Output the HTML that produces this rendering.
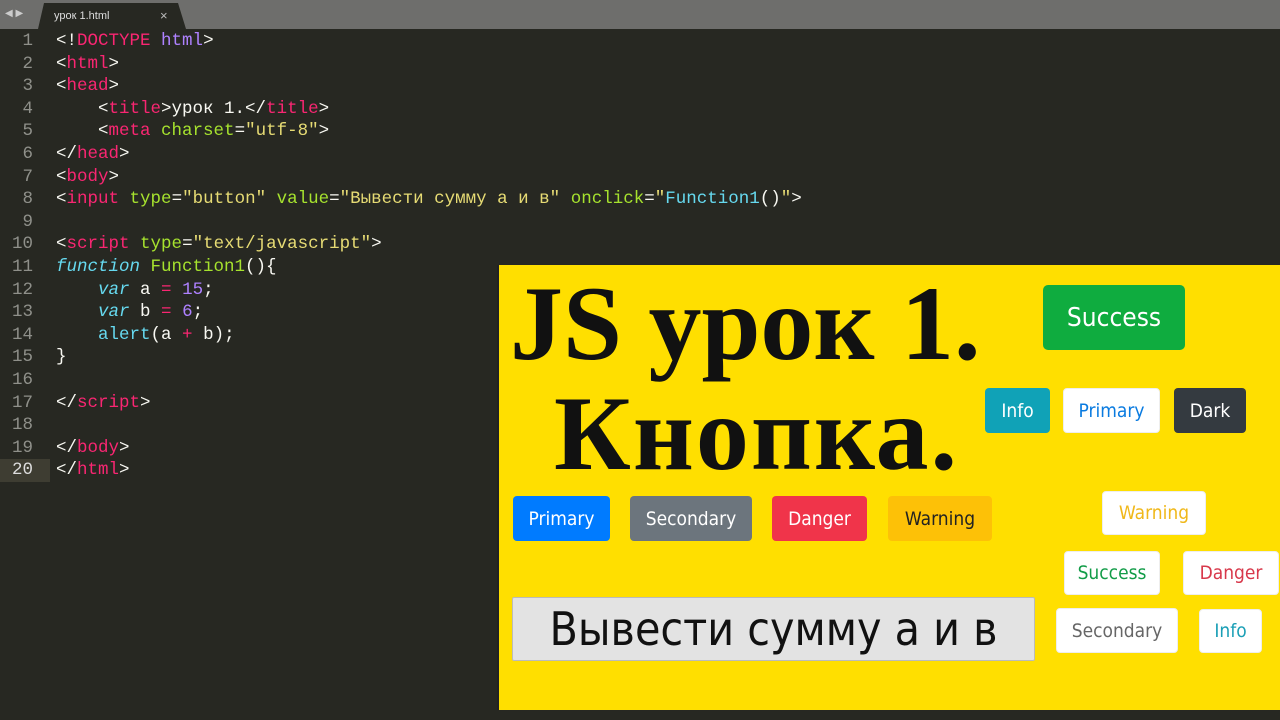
<!DOCTYPE html>
<html><head><meta charset="utf-8"><style>
body{margin:0;width:1280px;height:720px;background:#272822;position:relative;overflow:hidden;font-family:"Liberation Sans",sans-serif}
.tabbar{position:absolute;left:0;top:0;width:1280px;height:29px;background:#6e6e6c}
.tab{position:absolute;left:38px;top:3px;width:148px;height:26px;background:#272822;clip-path:polygon(6px 0,140px 0,148px 100%,0 100%)}
.tab span{position:absolute;left:16px;top:7px;color:#ddd;font-size:11px}
.tab b{position:absolute;left:122px;top:5px;color:#bbb;font-size:13px;font-weight:normal}
.arrows{position:absolute;left:5px;top:8px;color:#ccc;font-size:10px}
.code{position:absolute;left:0;top:30px;font-family:"Liberation Mono",monospace;font-size:17.5px;line-height:22.6px;color:#f8f8f2;white-space:pre}
.ln{display:inline-block;width:33px;text-align:right;color:#8f908a;margin-right:23px}
.cur{background:#3e3d32;display:inline-block;width:50px;margin-right:6px}
.cur .ln{margin-right:0}
.k{color:#f92672}.a{color:#a6e22e}.s{color:#e6db74}.p{color:#ae81ff}.c{color:#66d9ef}.i{color:#66d9ef;font-style:italic}
.panel{position:absolute;left:497px;top:265px;width:790px;height:445px;background:#ffdf00;border-left:2px solid #222}
.h{position:absolute;font-family:"Liberation Serif",serif;font-weight:bold;font-size:106px;color:#111;white-space:nowrap;line-height:1}
.btn{position:absolute;border-radius:4px;font-family:"DejaVu Sans Condensed","Liberation Sans",sans-serif;font-size:19px;display:flex;align-items:center;justify-content:center;box-sizing:border-box}
.w{background:#fff;border:1px solid #eee}
</style></head><body>
<div class="tabbar"><div class="arrows">◀ ▶</div><div class="tab"><span>урок 1.html</span><b>×</b></div></div>
<div class="code"><span class="ln">1</span>&lt;!<span class="k">DOCTYPE</span> <span class="p">html</span>&gt;
<span class="ln">2</span>&lt;<span class="k">html</span>&gt;
<span class="ln">3</span>&lt;<span class="k">head</span>&gt;
<span class="ln">4</span>    &lt;<span class="k">title</span>&gt;урок 1.&lt;/<span class="k">title</span>&gt;
<span class="ln">5</span>    &lt;<span class="k">meta</span> <span class="a">charset</span>=<span class="s">"utf-8"</span>&gt;
<span class="ln">6</span>&lt;/<span class="k">head</span>&gt;
<span class="ln">7</span>&lt;<span class="k">body</span>&gt;
<span class="ln">8</span>&lt;<span class="k">input</span> <span class="a">type</span>=<span class="s">"button"</span> <span class="a">value</span>=<span class="s">"Вывести сумму а и в"</span> <span class="a">onclick</span>=<span class="s">"</span><span class="c">Function1</span>()<span class="s">"</span>&gt;
<span class="ln">9</span>
<span class="ln">10</span>&lt;<span class="k">script</span> <span class="a">type</span>=<span class="s">"text/javascript"</span>&gt;
<span class="ln">11</span><span class="i">function</span> <span class="a">Function1</span>(){
<span class="ln">12</span>    <span class="i">var</span> a <span class="k">=</span> <span class="p">15</span>;
<span class="ln">13</span>    <span class="i">var</span> b <span class="k">=</span> <span class="p">6</span>;
<span class="ln">14</span>    <span class="c">alert</span>(a <span class="k">+</span> b);
<span class="ln">15</span>}
<span class="ln">16</span>
<span class="ln">17</span>&lt;/<span class="k">script</span>&gt;
<span class="ln">18</span>
<span class="ln">19</span>&lt;/<span class="k">body</span>&gt;
<span class="cur"><span class="ln" style="color:#ddd">20</span></span>&lt;/<span class="k">html</span>&gt;</div>
<div class="panel">
<div class="h" style="left:11px;top:6px">JS урок 1.</div>
<div class="h" style="left:55px;top:116px;letter-spacing:2px">Кнопка.</div>
<div class="btn" style="left:544px;top:20px;width:142px;height:65px;background:#0fac3f;color:#fff;font-size:26px;border-radius:5px">Success</div>
<div class="btn" style="left:486px;top:123px;width:65px;height:45px;background:#10a2b7;color:#fff">Info</div>
<div class="btn w" style="left:564px;top:123px;width:97px;height:45px;color:#0a7be0">Primary</div>
<div class="btn" style="left:675px;top:123px;width:72px;height:45px;background:#343a40;color:#fff">Dark</div>
<div class="btn" style="left:14px;top:231px;width:97px;height:45px;background:#007bff;color:#fff">Primary</div>
<div class="btn" style="left:131px;top:231px;width:122px;height:45px;background:#6c757d;color:#fff">Secondary</div>
<div class="btn" style="left:273px;top:231px;width:95px;height:45px;background:#f0344a;color:#fff">Danger</div>
<div class="btn" style="left:389px;top:231px;width:104px;height:45px;background:#fdc107;color:#222">Warning</div>
<div class="btn w" style="left:603px;top:226px;width:104px;height:44px;color:#f0b81a">Warning</div>
<div class="btn w" style="left:565px;top:286px;width:96px;height:44px;color:#129c48">Success</div>
<div class="btn w" style="left:684px;top:286px;width:96px;height:44px;color:#d8384b">Danger</div>
<div class="btn w" style="left:557px;top:343px;width:122px;height:45px;color:#666">Secondary</div>
<div class="btn w" style="left:700px;top:344px;width:63px;height:44px;color:#1a9fb6">Info</div>
<div class="btn" style="left:13px;top:332px;width:523px;height:64px;background:#e3e3e3;border:1px solid #bbb;border-radius:2px;color:#111;font-family:'DejaVu Sans Condensed','Liberation Sans',sans-serif;font-size:46px">Вывести сумму а и в</div>
</div>
</body></html>
